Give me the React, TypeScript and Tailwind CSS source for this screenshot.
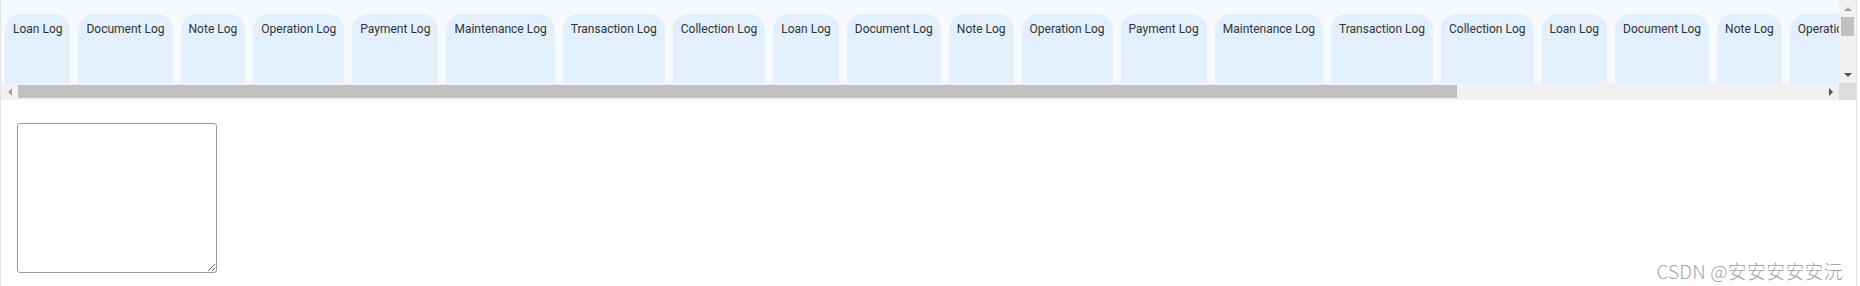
import React from "react";

const names = [
  "Loan Log",
  "Document Log",
  "Note Log",
  "Operation Log",
  "Payment Log",
  "Maintenance Log",
  "Transaction Log",
  "Collection Log",
];

const tabs = [...names, ...names, ...names];

const Arrow: React.FC<{ dir: "up" | "down" | "left" | "right"; dark?: boolean }> = ({ dir, dark }) => {
  const pts = {
    up: "0,4 4,0 8,4",
    down: "0,0 8,0 4,4",
    left: "4,0 4,8 0,4",
    right: "0,0 4,4 0,8",
  }[dir];
  const vertical = dir === "up" || dir === "down";
  return (
    <svg width={vertical ? 8 : 4} height={vertical ? 4 : 8} viewBox={vertical ? "0 0 8 4" : "0 0 4 8"}>
      <polygon points={pts} fill={dark ? "#505050" : "#a3a3a3"} />
    </svg>
  );
};

export default function App() {
  return (
    <div className="relative h-[286px] w-[1857px] border-x border-[#e4e4e4] bg-white font-['Roboto',sans-serif]">
      <div className="flex">
        <div className="flex min-w-0 flex-1 flex-col">
          <div className="flex h-[83px] gap-2 overflow-hidden bg-[#f6f9fe] pl-1 pt-[14px]">
            {tabs.map((t, i) => (
              <div
                key={i}
                className="shrink-0 rounded-t-2xl bg-[#e2effd] px-2 pt-[8px] text-[12px] leading-[14px] text-[#333]"
              >
                {t}
              </div>
            ))}
          </div>
          <div className="flex h-[17px] items-center bg-[#f1f1f1]">
            <div className="flex w-[17px] items-center justify-center">
              <Arrow dir="left" />
            </div>
            <div className="flex h-full flex-1 items-center">
              <div className="h-[13px] w-[1439px] bg-[#c1c1c1]" />
            </div>
            <div className="flex w-[17px] items-center justify-center">
              <Arrow dir="right" dark />
            </div>
          </div>
        </div>
        <div className="flex w-[17px] flex-col bg-[#f1f1f1]">
          <div className="flex h-[17px] items-center justify-center">
            <Arrow dir="up" />
          </div>
          <div className="mx-auto h-[19px] w-[13px] bg-[#c1c1c1]" />
          <div className="flex-1" />
          <div className="flex h-[17px] items-center justify-center">
            <Arrow dir="down" dark />
          </div>
          <div className="h-[17px] bg-[#dcdcdc]" />
        </div>
      </div>
      <div className="pl-4 pt-[23px]">
        <textarea className="block h-[150px] w-[200px] rounded-[3px] border border-[#999] bg-white" />
      </div>
      <div className="absolute bottom-[6px] right-[13px] font-['Noto_Sans_CJK_SC',sans-serif] text-[19px] font-light leading-none tracking-[0.2px] text-[#a6a6a6]">
        CSDN @安安安安安沅
      </div>
    </div>
  );
}
